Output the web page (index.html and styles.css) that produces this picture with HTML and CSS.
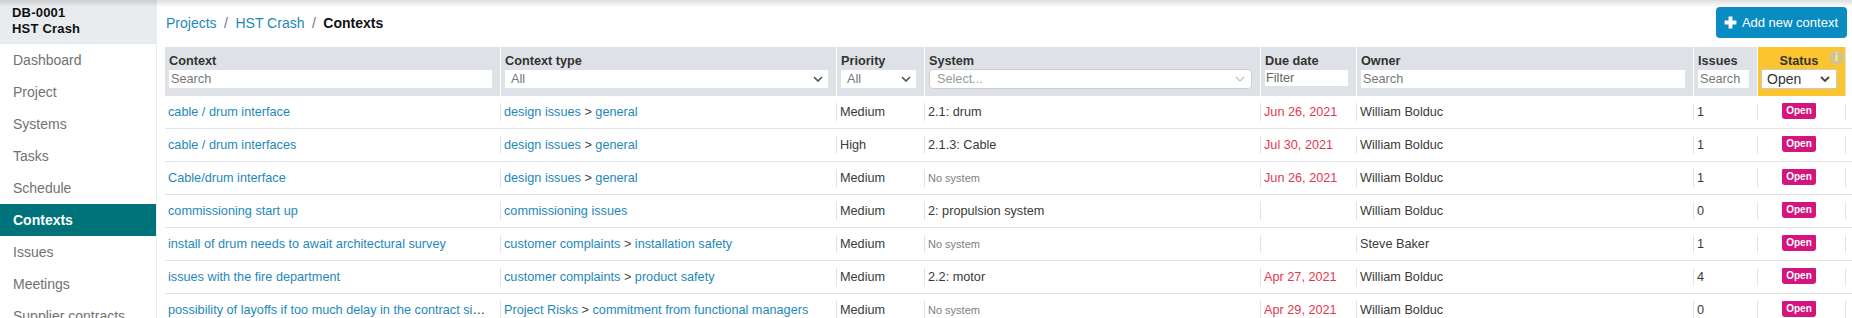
FILE: index.html
```html
<!DOCTYPE html>
<html lang="en">
<head>
<meta charset="utf-8">
<title>Contexts</title>
<link rel="stylesheet" href="styles.css">
</head>
<body>
<div class="app">
  <aside class="sidebar">
    <div class="proj">
      <div>DB-0001</div>
      <div>HST Crash</div>
    </div>
    <nav class="nav">
      <a class="nav-item">Dashboard</a>
      <a class="nav-item">Project</a>
      <a class="nav-item">Systems</a>
      <a class="nav-item">Tasks</a>
      <a class="nav-item">Schedule</a>
      <a class="nav-item active">Contexts</a>
      <a class="nav-item">Issues</a>
      <a class="nav-item">Meetings</a>
      <a class="nav-item">Supplier contracts</a>
    </nav>
  </aside>
  <main class="main">
    <div class="toolbar">
      <nav class="crumbs">
        <a class="crumb-link">Projects</a><span class="sep">/</span><a class="crumb-link">HST Crash</a><span class="sep">/</span><span class="crumb-current">Contexts</span>
      </nav>
      <button class="btn-add">
        <svg class="plus" width="13" height="13" viewBox="0 0 13 13"><path d="M4.6 0.6h3.8v4h4v3.8h-4v4h-3.8v-4h-4v-3.8h4z" fill="#fff"/></svg>
        <span>Add new context</span>
      </button>
    </div>
    <table class="grid">
      <colgroup>
        <col class="w-context">
        <col class="w-type">
        <col class="w-prio">
        <col class="w-system">
        <col class="w-due">
        <col class="w-owner">
        <col class="w-issues">
        <col class="w-status">
        <col class="w-extra">
      </colgroup>
      <thead>
        <tr>
          <th class="first"><div class="th-title">Context</div><div class="f-input ph">Search</div></th>
          <th><div class="th-title">Context type</div><div class="f-select"><span class="ph">All</span><svg width="10" height="6" viewBox="0 0 10 6"><path d="M1 1l4 4 4-4" fill="none" stroke="#555" stroke-width="1.6"/></svg></div></th>
          <th><div class="th-title">Priority</div><div class="f-select"><span class="ph">All</span><svg width="10" height="6" viewBox="0 0 10 6"><path d="M1 1l4 4 4-4" fill="none" stroke="#555" stroke-width="1.6"/></svg></div></th>
          <th><div class="th-title">System</div><div class="f-rselect"><span class="ph-light">Select...</span><svg width="10" height="6" viewBox="0 0 10 6"><path d="M1 1l4 4 4-4" fill="none" stroke="#c4c4c4" stroke-width="1.2"/></svg></div></th>
          <th><div class="th-title">Due date</div><div class="f-input f-date ph-dark">Filter</div></th>
          <th><div class="th-title">Owner</div><div class="f-input ph">Search</div></th>
          <th><div class="th-title">Issues</div><div class="f-input ph">Search</div></th>
          <th class="th-status"><div class="th-title center">Status</div><span class="info">i</span><div class="f-status"><span>Open</span><svg width="10" height="6" viewBox="0 0 10 6"><path d="M1 1l4 4 4-4" fill="none" stroke="#444" stroke-width="1.8"/></svg></div></th>
          <th class="th-extra"></th>
        </tr>
      </thead>
      <tbody>
        <tr>
          <td><div class="cell first"><a class="lnk">cable / drum interface</a></div></td>
          <td><div class="cell"><a class="lnk">design issues</a> <span class="gt">&gt;</span> <a class="lnk">general</a></div></td>
          <td><div class="cell">Medium</div></td>
          <td><div class="cell">2.1: drum</div></td>
          <td><div class="cell due">Jun 26, 2021</div></td>
          <td><div class="cell">William Bolduc</div></td>
          <td><div class="cell">1</div></td>
          <td><div class="cell center"><span class="badge">Open</span></div></td>
          <td><div class="cell"></div></td>
        </tr>
        <tr>
          <td><div class="cell first"><a class="lnk">cable / drum interfaces</a></div></td>
          <td><div class="cell"><a class="lnk">design issues</a> <span class="gt">&gt;</span> <a class="lnk">general</a></div></td>
          <td><div class="cell">High</div></td>
          <td><div class="cell">2.1.3: Cable</div></td>
          <td><div class="cell due">Jul 30, 2021</div></td>
          <td><div class="cell">William Bolduc</div></td>
          <td><div class="cell">1</div></td>
          <td><div class="cell center"><span class="badge">Open</span></div></td>
          <td><div class="cell"></div></td>
        </tr>
        <tr>
          <td><div class="cell first"><a class="lnk">Cable/drum interface</a></div></td>
          <td><div class="cell"><a class="lnk">design issues</a> <span class="gt">&gt;</span> <a class="lnk">general</a></div></td>
          <td><div class="cell">Medium</div></td>
          <td><div class="cell"><span class="nosys">No system</span></div></td>
          <td><div class="cell due">Jun 26, 2021</div></td>
          <td><div class="cell">William Bolduc</div></td>
          <td><div class="cell">1</div></td>
          <td><div class="cell center"><span class="badge">Open</span></div></td>
          <td><div class="cell"></div></td>
        </tr>
        <tr>
          <td><div class="cell first"><a class="lnk">commissioning start up</a></div></td>
          <td><div class="cell"><a class="lnk">commissioning issues</a></div></td>
          <td><div class="cell">Medium</div></td>
          <td><div class="cell">2: propulsion system</div></td>
          <td><div class="cell due"></div></td>
          <td><div class="cell">William Bolduc</div></td>
          <td><div class="cell">0</div></td>
          <td><div class="cell center"><span class="badge">Open</span></div></td>
          <td><div class="cell"></div></td>
        </tr>
        <tr>
          <td><div class="cell first"><a class="lnk">install of drum needs to await architectural survey</a></div></td>
          <td><div class="cell"><a class="lnk">customer complaints</a> <span class="gt">&gt;</span> <a class="lnk">installation safety</a></div></td>
          <td><div class="cell">Medium</div></td>
          <td><div class="cell"><span class="nosys">No system</span></div></td>
          <td><div class="cell due"></div></td>
          <td><div class="cell">Steve Baker</div></td>
          <td><div class="cell">1</div></td>
          <td><div class="cell center"><span class="badge">Open</span></div></td>
          <td><div class="cell"></div></td>
        </tr>
        <tr>
          <td><div class="cell first"><a class="lnk">issues with the fire department</a></div></td>
          <td><div class="cell"><a class="lnk">customer complaints</a> <span class="gt">&gt;</span> <a class="lnk">product safety</a></div></td>
          <td><div class="cell">Medium</div></td>
          <td><div class="cell">2.2: motor</div></td>
          <td><div class="cell due">Apr 27, 2021</div></td>
          <td><div class="cell">William Bolduc</div></td>
          <td><div class="cell">4</div></td>
          <td><div class="cell center"><span class="badge">Open</span></div></td>
          <td><div class="cell"></div></td>
        </tr>
        <tr>
          <td><div class="cell first"><a class="lnk">possibility of layoffs if too much delay in the contract signing</a></div></td>
          <td><div class="cell"><a class="lnk">Project Risks</a> <span class="gt">&gt;</span> <a class="lnk">commitment from functional managers</a></div></td>
          <td><div class="cell">Medium</div></td>
          <td><div class="cell"><span class="nosys">No system</span></div></td>
          <td><div class="cell due">Apr 29, 2021</div></td>
          <td><div class="cell">William Bolduc</div></td>
          <td><div class="cell">0</div></td>
          <td><div class="cell center"><span class="badge">Open</span></div></td>
          <td><div class="cell"></div></td>
        </tr>
      </tbody>
    </table>
  </main>
</div>
</body>
</html>
```

FILE: styles.css
```css
html, body {
  margin: 0;
  padding: 0;
  background: #fff;
}
body {
  font-family: "Liberation Sans", Arial, sans-serif;
  color: #3a3a3a;
}
.app {
  position: relative;
  display: flex;
  height: 318px;
  overflow: hidden;
  background: #fff;
}
.app::before {
  content: "";
  position: absolute;
  left: 0;
  right: 0;
  top: 0;
  height: 7px;
  background: linear-gradient(rgba(0,0,0,0.13), rgba(0,0,0,0));
  pointer-events: none;
  z-index: 5;
}

/* Sidebar */
.sidebar {
  width: 156px;
  flex-shrink: 0;
  border-right: 1px solid #e9ebed;
  background: #fff;
}
.proj {
  height: 44px;
  box-sizing: border-box;
  padding: 5px 12px 0 12px;
  background: #e9ecef;
  border-bottom: 1px solid #e3e6e9;
  font-weight: bold;
  font-size: 13px;
  line-height: 16px;
  color: #111;
  letter-spacing: 0.2px;
}
.nav {
  display: flex;
  flex-direction: column;
}
.nav-item {
  display: block;
  height: 32px;
  line-height: 32px;
  padding-left: 13px;
  font-size: 14px;
  color: #727272;
  white-space: nowrap;
}
.nav-item.active {
  background: #00737a;
  color: #fff;
  font-weight: bold;
}

/* Main */
.main {
  flex: 1;
  min-width: 0;
  padding: 7px 5px 0 8px;
  overflow: hidden;
}
.toolbar {
  display: flex;
  justify-content: space-between;
  align-items: center;
  height: 31px;
  margin-bottom: 9px;
}
.crumbs {
  font-size: 14px;
  padding-left: 1px;
  white-space: nowrap;
}
.crumb-link {
  color: #1e88ba;
}
.sep {
  color: #6c757d;
  padding: 0 7.5px;
}
.crumb-current {
  font-weight: bold;
  color: #111;
}
.btn-add {
  display: inline-flex;
  align-items: center;
  gap: 5px;
  height: 31px;
  padding: 0 9px 0 8px;
  border: 0;
  border-radius: 4px;
  background: #098cc2;
  color: #fff;
  font-family: "Liberation Sans", Arial, sans-serif;
  font-size: 13px;
}
.plus {
  display: block;
}

/* Table */
.grid {
  table-layout: fixed;
  border-collapse: separate;
  border-spacing: 0;
  width: 1740px;
  font-size: 12.7px;
}
.w-context { width: 335px; }
.w-type { width: 336px; }
.w-prio { width: 88px; }
.w-system { width: 336px; }
.w-due { width: 96px; }
.w-owner { width: 337px; }
.w-issues { width: 64px; }
.w-status { width: 88px; }
.w-extra { width: 60px; }

.grid th {
  position: relative;
  background: #dee2e6;
  border-left: 1px solid #fff;
  padding: 5px 8px 8px 4px;
  text-align: left;
  vertical-align: top;
  font-weight: normal;
}
.grid th.first {
  border-left: 0;
}
.th-title {
  font-weight: bold;
  line-height: 18px;
  height: 18px;
  color: #333;
  white-space: nowrap;
}
.center {
  text-align: center;
}
.f-input {
  height: 18px;
  line-height: 18px;
  background: #fff;
  padding: 0 2px;
  white-space: nowrap;
  overflow: hidden;
}
.f-date {
  height: 16px;
  line-height: 16px;
  padding: 0 1px;
}
.ph { color: #777; }
.ph-dark { color: #666; }
.ph-light { color: #999; }
.f-select {
  height: 18px;
  background: #fff;
  display: flex;
  align-items: center;
  justify-content: space-between;
  padding: 0 5px 0 6px;
}
.f-rselect {
  height: 20px;
  margin: -1px 0;
  box-sizing: border-box;
  background: #fff;
  border: 1px solid #cfcfcf;
  border-radius: 4px;
  display: flex;
  align-items: center;
  justify-content: space-between;
  padding: 0 6px 0 7px;
}
.th-status {
  background: #fcc42e !important;
  padding-left: 3px !important;
}
.f-status {
  height: 20px;
  margin: -1px 0;
  box-sizing: border-box;
  background: #fff;
  border: 1px solid #c9c9c9;
  display: flex;
  align-items: center;
  justify-content: space-between;
  padding: 0 6px 0 5px;
  font-size: 14px;
  color: #333;
}
.info {
  position: absolute;
  top: 3px;
  right: 1px;
  width: 15px;
  height: 15px;
  border-radius: 50%;
  background: #d6c384;
  color: #f6e8b8;
  font-family: "Liberation Serif", serif;
  font-weight: bold;
  font-size: 12px;
  line-height: 15px;
  text-align: center;
}
.grid th.th-extra {
  background: #fff;
  border-left: 1px solid #dee2e6;
}

.grid td {
  padding: 7px 0;
  border-bottom: 1px solid #e1e4e7;
  vertical-align: top;
}
.cell {
  height: 18px;
  line-height: 18px;
  border-left: 1px solid #e1e4e7;
  padding: 0 8px 0 3px;
  white-space: nowrap;
  overflow: hidden;
  text-overflow: ellipsis;
  color: #3a3a3a;
}
.cell.first {
  border-left: 0;
}
.lnk {
  color: #1e88ba;
}
.gt {
  color: #444;
}
.due {
  color: #e03a4e;
}
.nosys {
  font-size: 11px;
  color: #808080;
}
.badge {
  display: inline-block;
  height: 17px;
  line-height: 17px;
  padding: 0 4px;
  margin-top: -1px;
  border-radius: 3px;
  background: #d4157e;
  color: #fff;
  font-weight: bold;
  font-size: 10px;
  vertical-align: top;
}
```
